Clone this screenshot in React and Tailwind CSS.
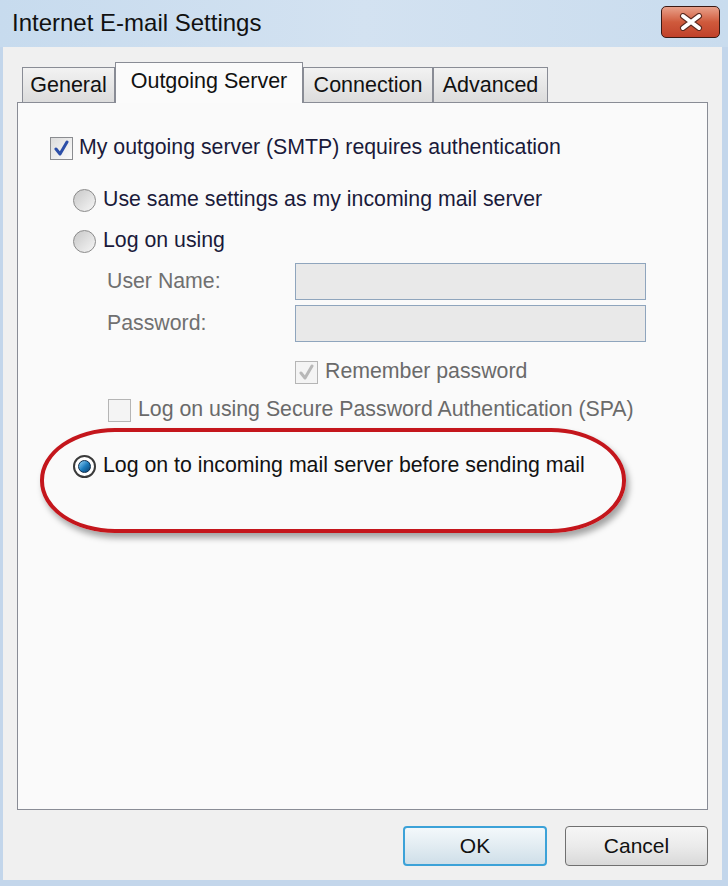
import React from 'react';

const font = { fontFamily: '"Liberation Sans", Arial, sans-serif' };

function Checkbox({ checked, disabled }) {
  return (
    <span
      className={`w-[23px] h-[23px] shrink-0 border flex items-center justify-center ${
        disabled ? 'border-[#b5b5b5] bg-[#f4f4f4]' : 'border-[#8a8c90] bg-gradient-to-br from-[#dcdcdc] to-[#fbfbfb]'
      }`}
    >
      {checked && (
        <svg width="17" height="17" viewBox="0 0 17 17">
          <path
            d="M3 9 L7 14 L14 2"
            fill="none"
            stroke={disabled ? '#b8b8b8' : '#2b4ea8'}
            strokeWidth="3"
            strokeLinecap="round"
            strokeLinejoin="round"
          />
        </svg>
      )}
    </span>
  );
}

function Radio({ checked }) {
  return (
    <span
      className={`w-[23px] h-[23px] shrink-0 rounded-full border flex items-center justify-center ${
        checked ? 'border-[#3a3a3a] bg-white border-[2px]' : 'border-[#8a8a8a] bg-gradient-to-br from-[#c8c8c8] to-[#f6f6f6]'
      }`}
    >
      {checked && (
        <span className="w-[13px] h-[13px] rounded-full bg-gradient-to-br from-[#8fd3f5] via-[#1e7fc0] to-[#0d3f6e] border border-[#0b2c4d]" />
      )}
    </span>
  );
}

function Tab({ label, active }) {
  if (active) {
    return (
      <div className="relative z-10 -mb-px h-[41px] w-[188px] border border-b-0 border-[#898c95] bg-[#fbfbfb] flex items-center justify-center text-[21.5px] text-[#111]">
        <span className="-mt-[3px]">{label}</span>
      </div>
    );
  }
  return (
    <div className="h-[35px] border border-b-0 border-[#898c95] bg-gradient-to-b from-[#f2f2f2] to-[#dcdcdc] flex items-center justify-center text-[21.5px] text-[#111]">
      {label}
    </div>
  );
}

export default function App() {
  return (
    <div style={font} className="w-[728px] h-[886px] bg-[#c3d6eb] flex flex-col overflow-hidden">
      {/* Title bar */}
      <div className="h-[47px] shrink-0 flex items-center justify-between pl-[12px] pr-[8px] bg-gradient-to-r from-[#c7dbee] via-[#d3e2f1] to-[#c9dcee]">
        <span className="text-[24px] text-[#111] -mt-[1px]">Internet E-mail Settings</span>
        <div className="w-[59px] h-[32px] -mt-[4px] rounded-[5px] border border-[#3b1a14] bg-gradient-to-b from-[#e8a08a] via-[#cf5a3c] to-[#c0412a] flex items-center justify-center">
          <svg width="28" height="18" viewBox="0 0 28 18">
            <path d="M6 3 L22 15 M22 3 L6 15" stroke="#5a2a20" strokeWidth="6" strokeLinecap="round" />
            <path d="M6 3 L22 15 M22 3 L6 15" stroke="#ffffff" strokeWidth="4" strokeLinecap="round" />
          </svg>
        </div>
      </div>

      {/* Body */}
      <div className="flex-1 ml-[3px] mr-[6px] mb-[6px] bg-[#f0f0f0] flex flex-col px-[14px]">
        {/* Tabs */}
        <div className="flex items-end pt-[15px] pl-[5px]">
          <div className="w-[93px]"><Tab label="General" /></div>
          <Tab label="Outgoing Server" active />
          <div className="w-[130px]"><Tab label="Connection" /></div>
          <div className="w-[115px]"><Tab label="Advanced" /></div>
        </div>

        {/* Panel */}
        <div className="h-[708px] border border-[#898c95] bg-[#fafafa] flex flex-col text-[21.3px] text-[#1a1a3a]">
          <div className="flex items-center h-[30px] mt-[30px] ml-[32px] gap-[6px]">
            <Checkbox checked />
            <span>My outgoing server (SMTP) requires authentication</span>
          </div>

          <div className="flex items-center h-[30px] mt-[22px] ml-[55px] gap-[7px]">
            <Radio />
            <span>Use same settings as my incoming mail server</span>
          </div>

          <div className="flex items-center h-[30px] mt-[11px] ml-[55px] gap-[7px]">
            <Radio />
            <span>Log on using</span>
          </div>

          <div className="flex items-center h-[37px] mt-[7px] ml-[89px]">
            <span className="w-[188px] text-[#707070]">User Name:</span>
            <div className="w-[351px] h-[37px] border border-[#8fa5bd] bg-[#e9e9e9]" />
          </div>

          <div className="flex items-center h-[37px] mt-[5px] ml-[89px]">
            <span className="w-[188px] text-[#707070]">Password:</span>
            <div className="w-[351px] h-[37px] border border-[#8fa5bd] bg-[#e9e9e9]" />
          </div>

          <div className="flex items-center h-[30px] mt-[15px] ml-[277px] gap-[7px] text-[#6a6a6a]">
            <Checkbox checked disabled />
            <span>Remember password</span>
          </div>

          <div className="flex items-center h-[30px] mt-[8px] ml-[90px] gap-[7px] text-[#6a6a6a]">
            <Checkbox disabled />
            <span>Log on using Secure Password Authentication (SPA)</span>
          </div>

          <div className="relative flex items-center h-[30px] mt-[26px] ml-[55px] gap-[7px] text-[#111]">
            <div className="absolute left-[-33px] top-[-23px] w-[586px] h-[105px] rounded-[75px/52px] border-[4px] border-[#c4161c] shadow-[3px_5px_6px_rgba(0,0,0,0.35)] pointer-events-none" />
            <Radio checked />
            <span>Log on to incoming mail server before sending mail</span>
          </div>
        </div>

        {/* Buttons */}
        <div className="flex justify-end gap-[18px] mt-[16px]">
          <button className="w-[144px] h-[40px] rounded-[4px] border-[2px] border-[#3ca2d8] bg-gradient-to-b from-[#f3f8fb] via-[#e2ecf2] to-[#cfdfe9] text-[21px] text-[#111] flex items-center justify-center">
            OK
          </button>
          <button className="w-[143px] h-[40px] rounded-[4px] border border-[#707070] bg-gradient-to-b from-[#f6f6f6] via-[#ebebeb] to-[#d9d9d9] text-[21px] text-[#111] flex items-center justify-center">
            Cancel
          </button>
        </div>
      </div>
    </div>
  );
}
